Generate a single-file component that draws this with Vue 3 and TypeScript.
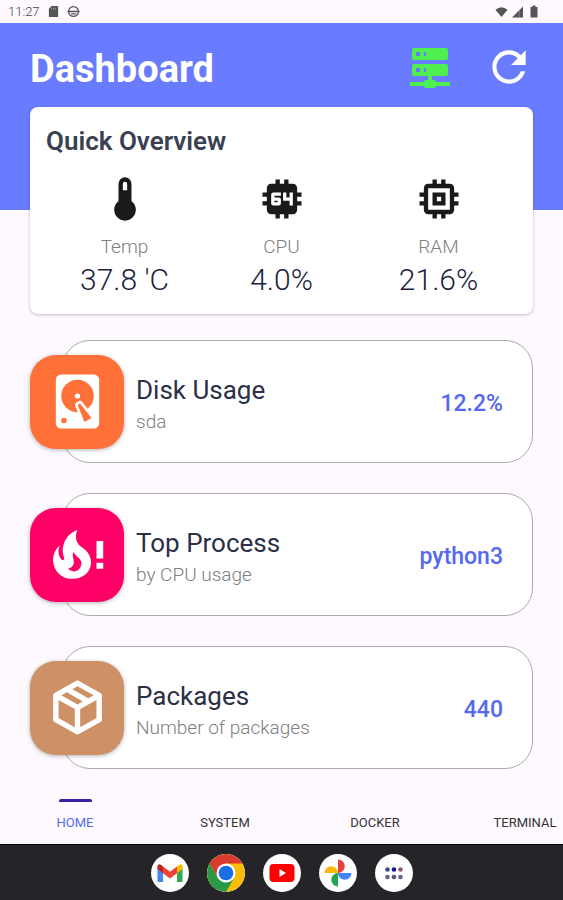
<script setup lang="ts">
import { ref } from 'vue'

interface Stat {
  label: string
  value: string
  icon: string
}

interface Detail {
  title: string
  subtitle: string
  value: string
  tone: string
  icon: string
}

const chipBody =
  'M21,11V9H19V7C19,5.89 18.1,5 17,5H15V3H13V5H11V3H9V5H7C5.89,5 5,5.89 5,7V9H3V11H5V13H3V15H5V17A2,2 0 0,0 7,19H9V21H11V19H13V21H15V19H17A2,2 0 0,0 19,17V15H21V13H19V11Z'

const stats: Stat[] = [
  {
    label: 'Temp',
    value: "37.8 'C",
    icon: 'M15 13V5A3 3 0 0 0 9 5V13A5 5 0 1 0 15 13M12 4A1 1 0 0 1 13 5V8H11V5A1 1 0 0 1 12 4Z',
  },
  {
    label: 'CPU',
    value: '4.0%',
    icon:
      chipBody +
      'M8,9H11.5V10.5H8.5V11.25H10.5A1,1 0 0,1 11.5,12.25V14A1,1 0 0,1 10.5,15H8A1,1 0 0,1 7,14V10A1,1 0 0,1 8,9ZM8.5,12.75V13.5H10V12.75ZM12.5,9H14V11.25H15.5V9H17V15H15.5V12.75H12.5Z',
  },
  {
    label: 'RAM',
    value: '21.6%',
    icon: chipBody + 'M7,7H17V17H7ZM9,9V15H15V9ZM11,11H13V13H11Z',
  },
]

const details: Detail[] = [
  {
    title: 'Disk Usage',
    subtitle: 'sda',
    value: '12.2%',
    tone: 'orange',
    icon: 'M6,2H18A2,2 0 0,1 20,4V20A2,2 0 0,1 18,22H6A2,2 0 0,1 4,20V4A2,2 0 0,1 6,2M12,4A6,6 0 0,0 6,10C6,13.31 8.69,16 12.1,16L11.22,13.77C10.95,13.29 11.11,12.68 11.59,12.4L12.45,11.9C12.93,11.63 13.54,11.79 13.82,12.27L15.74,14.69C17.12,13.59 18,11.9 18,10A6,6 0 0,0 12,4M12,9A1,1 0 0,1 13,10A1,1 0 0,1 12,11A1,1 0 0,1 11,10A1,1 0 0,1 12,9M7,18A1,1 0 0,0 6,19A1,1 0 0,0 7,20A1,1 0 0,0 8,19A1,1 0 0,0 7,18M12.09,13.27L14.58,19.58L17.17,18.08L12.95,12.77L12.09,13.27Z',
  },
  {
    title: 'Top Process',
    subtitle: 'by CPU usage',
    value: 'python3',
    tone: 'pink',
    icon: 'M15.66 11.2C15.43 10.9 15.15 10.64 14.89 10.38C14.22 9.78 13.46 9.35 12.82 8.72C11.33 7.26 11 4.85 11.95 3C11 3.23 10.17 3.75 9.46 4.32C6.87 6.4 5.85 10.07 7.07 13.22C7.11 13.32 7.15 13.42 7.15 13.55C7.15 13.77 7 13.97 6.8 14.05C6.57 14.15 6.33 14.09 6.14 13.93C6.08 13.88 6.04 13.83 6 13.76C4.87 12.33 4.69 10.28 5.45 8.64C3.78 10 2.87 12.3 3 14.47C3.06 14.97 3.12 15.47 3.29 15.97C3.43 16.57 3.7 17.17 4 17.7C5.08 19.43 6.95 20.67 8.96 20.92C11.1 21.19 13.39 20.8 15.03 19.32C16.86 17.66 17.5 15 16.56 12.72L16.43 12.46C16.22 12 15.66 11.2 15.66 11.2ZM12.5 17.5C12.22 17.74 11.76 18 11.4 18.1C10.28 18.5 9.16 17.94 8.5 17.28C9.69 17 10.4 16.12 10.61 15.23C10.78 14.43 10.46 13.77 10.33 13C10.21 12.26 10.23 11.63 10.5 10.94C10.69 11.32 10.89 11.7 11.13 12C11.9 13 13.11 13.44 13.37 14.8C13.41 14.94 13.43 15.08 13.43 15.23C13.46 16.05 13.1 16.95 12.5 17.5ZM19 7H21.500V13.500H19ZM19 15H21.500V17.300H19Z',
  },
  {
    title: 'Packages',
    subtitle: 'Number of packages',
    value: '440',
    tone: 'tan',
    icon: 'M21,16.5C21,16.88 20.79,17.21 20.47,17.38L12.57,21.82C12.41,21.94 12.21,22 12,22C11.79,22 11.59,21.94 11.43,21.82L3.53,17.38C3.21,17.21 3,16.88 3,16.5V7.5C3,7.12 3.21,6.79 3.53,6.62L11.43,2.18C11.59,2.06 11.79,2 12,2C12.21,2 12.41,2.06 12.57,2.18L20.47,6.62C20.79,6.79 21,7.12 21,7.5V16.5M12,4.15L10.11,5.22L16,8.61L17.96,7.5L12,4.15M6.04,7.5L12,10.85L13.96,9.75L8.08,6.35L6.04,7.5M5,15.91L11,19.29V12.58L5,9.21V15.91M19,15.91V9.21L13,12.58V19.29L19,15.91Z',
  },
]

const tabs: string[] = ['HOME', 'SYSTEM', 'DOCKER', 'TERMINAL']
const activeTab = ref<string>('HOME')
</script>

<template>
  <div class="screen">
    <div class="status">
      <span class="clock">11:27</span>
      <svg class="status-icon" viewBox="0 0 12 14">
        <path d="M4 1H10Q11 1 11 2V12Q11 13 10 13H2Q1 13 1 12V4Z" fill="#555" />
        <path d="M4 3V5M6 3V5M8 3V5" stroke="#aaa" stroke-width="0.8" />
      </svg>
      <svg class="status-icon" viewBox="0 0 14 14" fill="none" stroke="#555">
        <circle cx="7" cy="7" r="5.3" stroke-width="1.3" />
        <path d="M0.5 7H13.5M4.500 9.500H9.500" stroke-width="1.5" />
      </svg>
      <span class="grow"></span>
      <svg class="status-icon wide" viewBox="0 0 14 12">
        <path d="M0.5 3.5Q7 -2 13.5 3.5L7 11.5Z" fill="#555" />
      </svg>
      <svg class="status-icon wide" viewBox="0 0 12 12">
        <path d="M11.5 0.5V11.5H0.5Z" fill="#555" />
        <path d="M8 4V11.5" stroke="#888" stroke-width="0.7" />
      </svg>
      <svg class="status-icon battery" viewBox="0 0 8 13">
        <path d="M2.5 0.5H5.5V2H7.5V12.5H0.5V2H2.5Z" fill="#555" />
      </svg>
    </div>

    <header class="header">
      <h1>Dashboard</h1>
      <button class="icon-button server" type="button" aria-label="Server">
        <svg viewBox="0 0 24 24" fill="currentColor">
          <path
            d="M13,19H14A1,1 0 0,1 15,20H22V22H15A1,1 0 0,1 14,23H10A1,1 0 0,1 9,22H2V20H9A1,1 0 0,1 10,19H11V17H4A1,1 0 0,1 3,16V12A1,1 0 0,1 4,11H20A1,1 0 0,1 21,12V16A1,1 0 0,1 20,17H13V19M4,3H20A1,1 0 0,1 21,4V8A1,1 0 0,1 20,9H4A1,1 0 0,1 3,8V4A1,1 0 0,1 4,3M9,7H10V5H9V7M9,15H10V13H9V15M5,5V7H7V5H5M5,13V15H7V13H5Z"
          />
        </svg>
      </button>
      <button class="icon-button" type="button" aria-label="Refresh">
        <svg viewBox="0 0 24 24" fill="currentColor">
          <path
            d="M17.65 6.35C16.2 4.9 14.21 4 12 4c-4.42 0-7.99 3.58-7.99 8s3.57 8 7.99 8c3.73 0 6.84-2.55 7.73-6h-2.08c-.82 2.33-3.04 4-5.65 4-3.31 0-6-2.69-6-6s2.69-6 6-6c1.66 0 3.14.69 4.22 1.78L13 11h7V4l-2.35 2.35z"
          />
        </svg>
      </button>
    </header>

    <main class="content">
      <section class="overview">
        <h2>Quick Overview</h2>
        <div class="stats">
          <div v-for="stat in stats" :key="stat.label" class="stat">
            <svg viewBox="0 0 24 24"><path :d="stat.icon" fill="#1a1a1a" fill-rule="evenodd" /></svg>
            <span class="stat-label">{{ stat.label }}</span>
            <span class="stat-value">{{ stat.value }}</span>
          </div>
        </div>
      </section>

      <section v-for="item in details" :key="item.title" class="detail">
        <div class="tile" :class="item.tone">
          <svg viewBox="0 0 24 24"><path :d="item.icon" fill="#fff" fill-rule="evenodd" /></svg>
        </div>
        <div class="detail-text">
          <h3>{{ item.title }}</h3>
          <p>{{ item.subtitle }}</p>
        </div>
        <strong class="detail-value">{{ item.value }}</strong>
      </section>
    </main>

    <nav class="tabs">
      <button
        v-for="tab in tabs"
        :key="tab"
        type="button"
        class="tab"
        :class="{ active: tab === activeTab }"
        @click="activeTab = tab"
      >
        <span class="marker"></span>
        {{ tab }}
      </button>
    </nav>

    <footer class="dock">
      <button class="app" type="button" aria-label="Mail">
        <svg viewBox="0 0 38 38">
          <path d="M6.5 12V28H12V17Z" fill="#4285f4" />
          <path d="M31.500 12V28H26V17Z" fill="#34a853" />
          <path d="M26 12.500L28 10.800Q31.500 9 31.500 13V15L26 19.200Z" fill="#fbbc04" />
          <path d="M6.500 13Q6.500 9 10 10.800L12 12.500V19.200L6.500 15Z" fill="#c5221f" />
          <path d="M12 12.500L19 17.800L26 12.500V19.200L19 24.500L12 19.200Z" fill="#ea4335" />
        </svg>
      </button>
      <button class="app" type="button" aria-label="Browser">
        <svg viewBox="0 0 38 38">
          <circle cx="19" cy="19" r="19" fill="#fbbc04" />
          <path d="M2.550 9.500A19 19 0 0 1 35.450 9.500H19L10.770 23.750Z" fill="#db3a2e" />
          <path d="M2.550 9.500A19 19 0 0 0 19 38L27.230 23.750L19 19L10.770 23.750Z" fill="#2a9a47" />
          <circle cx="19" cy="19" r="9.500" fill="#fff" />
          <circle cx="19" cy="19" r="7.300" fill="#1a6fe8" />
        </svg>
      </button>
      <button class="app" type="button" aria-label="Videos">
        <svg viewBox="0 0 38 38">
          <rect x="6.500" y="10" width="25" height="18" rx="4" fill="#f00" />
          <path d="M16.500 15V23L23 19Z" fill="#fff" />
        </svg>
      </button>
      <button class="app" type="button" aria-label="Photos">
        <svg viewBox="0 0 38 38">
          <path d="M19 5.500A6.700 6.700 0 0 1 19 19Z" fill="#e5413a" />
          <path d="M32.500 19A6.700 6.700 0 0 1 19 19Z" fill="#4285f4" />
          <path d="M19 32.500A6.700 6.700 0 0 1 19 19Z" fill="#23a455" />
          <path d="M5.500 19A6.700 6.700 0 0 1 19 19Z" fill="#fbb80a" />
        </svg>
      </button>
      <button class="app" type="button" aria-label="All apps">
        <svg viewBox="0 0 38 38">
          <circle cx="12.500" cy="15.500" r="2.300" fill="#3f4a8c" />
          <circle cx="19" cy="15.500" r="2.300" fill="#16168a" />
          <circle cx="25.500" cy="15.500" r="2.300" fill="#8a5a78" />
          <circle cx="12.500" cy="23" r="2.300" fill="#62628c" />
          <circle cx="19" cy="23" r="2.300" fill="#55558a" />
          <circle cx="25.500" cy="23" r="2.300" fill="#62628c" />
        </svg>
      </button>
    </footer>
  </div>
</template>

<style>
body {
  background: #fef9ff;
}
</style>

<style scoped>
.screen {
  display: flex;
  flex-direction: column;
  min-height: 100vh;
  overflow: hidden;
  background: #fef9ff;
  font-family: Roboto, "Liberation Sans", sans-serif;
  color: #3a4150;
}

h1,
h2,
h3,
p {
  margin: 0;
}

svg {
  display: block;
}

button {
  border: 0;
  padding: 0;
  background: none;
  font: inherit;
  cursor: pointer;
}

.status {
  display: flex;
  align-items: center;
  gap: 7px;
  height: 23px;
  padding: 0 25px 0 8px;
}

.clock {
  font-size: 13px;
  font-weight: 300;
  color: #444;
}

.status-icon {
  width: 13px;
  height: 13px;
}

.status-icon.wide {
  height: 12px;
  margin-right: -4px;
}

.status-icon.battery {
  width: 8px;
  margin-left: 3px;
}

.grow {
  flex: 1;
}

.header {
  display: flex;
  align-items: flex-start;
  gap: 30px;
  height: 187px;
  box-sizing: border-box;
  padding: 19px 29px 19px 30px;
  background: #697bff;
  color: #fff;
}

.header h1 {
  flex: 1;
  font-size: 38px;
  line-height: 54px;
  font-weight: 700;
}

.icon-button {
  color: #fff;
}

.icon-button svg {
  width: 50px;
  height: 50px;
}

.icon-button.server {
  color: #4df04f;
}

.icon-button.server svg {
  width: 48px;
  height: 48px;
}

.content {
  display: flex;
  flex-direction: column;
  flex: 1;
  gap: 30px;
  margin-top: -103px;
  padding: 0 30px;
}

.overview {
  padding: 16px 16px 15px;
  margin-bottom: -4px;
  border-radius: 8px;
  background: #fff;
  box-shadow: 0 1px 3px rgba(0, 0, 0, 0.25);
}

.overview h2 {
  font-size: 26px;
  line-height: 36px;
  font-weight: 600;
}

.stats {
  display: grid;
  grid-template-columns: repeat(3, 1fr);
  margin-top: 14px;
}

.stat {
  display: flex;
  flex-direction: column;
  align-items: center;
}

.stat svg {
  width: 52px;
  height: 52px;
}

.stat-label {
  margin-top: 8px;
  font-size: 19px;
  line-height: 28px;
  font-weight: 300;
  color: #808080;
}

.stat-value {
  font-size: 30px;
  line-height: 38px;
  font-weight: 300;
  color: #1b1f3b;
}

.detail {
  display: flex;
  align-items: center;
  gap: 12px;
  height: 123px;
  box-sizing: border-box;
  margin-left: 32px;
  padding-right: 29px;
  border: 1px solid #aaa;
  border-radius: 28px;
  background: #fff;
}

.tile {
  display: grid;
  place-items: center;
  width: 94px;
  height: 94px;
  margin-left: -33px;
  border-radius: 26px;
  box-shadow: 0 1px 4px rgba(0, 0, 0, 0.3);
}

.tile svg {
  width: 65px;
  height: 65px;
}

.tile.orange {
  background: #ff7139;
}

.tile.pink {
  background: #ff0066;
}

.tile.tan {
  background: #cd9165;
}

.detail-text {
  flex: 1;
  padding-top: 4px;
}

.detail-text h3 {
  font-size: 26px;
  line-height: 36px;
  font-weight: 400;
  color: #2b2f48;
}

.detail-text p {
  font-size: 19px;
  line-height: 28px;
  font-weight: 300;
  color: #808080;
}

.detail-value {
  padding-top: 4px;
  font-size: 23px;
  font-weight: 500;
  color: #5569f0;
}

.tabs {
  display: flex;
  height: 50px;
  margin-top: 24px;
}

.tab {
  display: flex;
  flex: 0 0 150px;
  flex-direction: column;
  align-items: center;
  gap: 13px;
  padding-top: 5px;
  font-size: 13px;
  line-height: 16px;
  color: #333;
}

.tab.active {
  color: #5569f0;
}

.marker {
  width: 33px;
  height: 3px;
  border-radius: 2px 2px 0 0;
}

.tab.active .marker {
  background: #3b1fa8;
}

.dock {
  display: flex;
  align-items: center;
  justify-content: center;
  gap: 18px;
  height: 56px;
  box-sizing: border-box;
  border-top: 1px solid #000;
  background: #252529;
}

.app {
  width: 38px;
  height: 38px;
  border-radius: 50%;
  overflow: hidden;
  background: #fff;
}
</style>
